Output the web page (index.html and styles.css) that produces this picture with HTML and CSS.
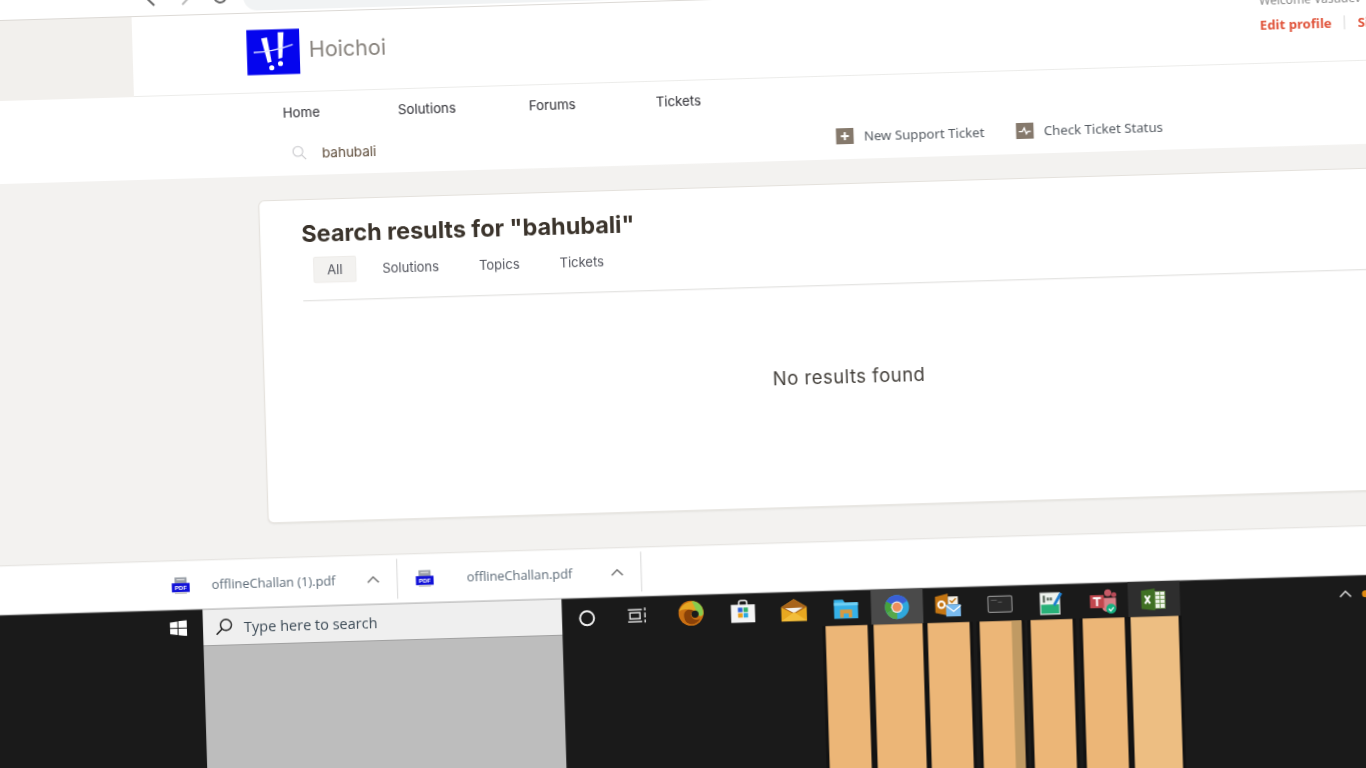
FILE: index.html
```html
<!DOCTYPE html>
<html lang="en">
<head>
<meta charset="utf-8">
<title>Hoichoi support search</title>
<link rel="stylesheet" href="styles.css">
</head>
<body>
<div class="stage">
  <div class="toolbar">
    <svg class="tb-icon" viewBox="0 0 16 16"><path d="M9 1 2 8l7 7M2 8h14" fill="none" stroke="#666" stroke-width="2"/></svg>
    <svg class="tb-icon" viewBox="0 0 16 16"><path d="M7 1l7 7-7 7" fill="none" stroke="#bbb" stroke-width="2"/></svg>
    <svg class="tb-icon tb-reload" viewBox="0 0 16 16"><path d="M14 8a6 6 0 1 1-2-4.5" fill="none" stroke="#666" stroke-width="2"/></svg>
    <div class="address"></div>
  </div>

  <header class="head">
    <div class="head-side"></div>
    <div class="head-main">
      <svg class="logo" viewBox="0 0 54 46">
        <rect width="54" height="46" fill="#0505ee"/>
        <path d="M15 9l6-1 4 25-4 1zM32 3h6l-2 26-4 1z" fill="#fff"/>
        <circle cx="25" cy="39" r="2.6" fill="#fff"/><circle cx="34" cy="35" r="2.6" fill="#fff"/>
        <path d="M7 23c13 0 28-3 40-7" fill="none" stroke="#dfe3ff" stroke-width="1.4"/>
      </svg>
      <span class="brand">Hoichoi</span>
      <div class="user">
        <div class="welcome">Welcome Vasudev</div>
        <div class="links"><span class="link">Edit profile</span><span class="pipe"></span><span class="link">Sign out</span></div>
      </div>
    </div>
  </header>

  <nav class="nav">
    <div class="nav-links">
      <span class="nav-link">Home</span>
      <span class="nav-link">Solutions</span>
      <span class="nav-link nav-forums">Forums</span>
      <span class="nav-link nav-tickets">Tickets</span>
    </div>
    <div class="nav-tools">
      <div class="search">
        <svg class="search-icon" viewBox="0 0 16 16"><circle cx="6.5" cy="6.5" r="5.2" fill="none" stroke="#c4c4c8" stroke-width="1.1"/><path d="M10.5 10.5 15 15" stroke="#c4c4c8" stroke-width="1.1"/></svg>
        <span class="search-text">bahubali</span>
      </div>
      <div class="action">
        <svg class="action-icon" viewBox="0 0 18 16"><rect width="18" height="16" fill="#85796c"/><path d="M9 4v8M5 8h8" stroke="#fff" stroke-width="2"/></svg>
        <span>New Support Ticket</span>
      </div>
      <div class="action">
        <svg class="action-icon" viewBox="0 0 18 16"><rect width="18" height="16" fill="#85796c"/><path d="M3 8.5h3.5L8.5 5l2 6 1.5-2.5h3" fill="none" stroke="#fff" stroke-width="1.3"/></svg>
        <span>Check Ticket Status</span>
      </div>
    </div>
  </nav>

  <main class="body">
    <section class="card">
      <h1 class="title">Search results for "bahubali"</h1>
      <div class="tabs">
        <span class="tab tab-on">All</span>
        <span class="tab">Solutions</span>
        <span class="tab">Topics</span>
        <span class="tab">Tickets</span>
      </div>
      <div class="rule"></div>
      <p class="empty">No results found</p>
    </section>
  </main>

  <div class="downloads">
    <div class="dl">
      <svg class="pdf" viewBox="0 0 18 17"><rect x="3" y="0" width="12" height="8" fill="#9aa0a8"/><rect x="5" y="2" width="8" height="1" fill="#e8e8e8"/><rect x="0" y="6" width="18" height="9" fill="#1212d8"/><rect x="3" y="15" width="12" height="2" fill="#c8c8c8"/><text x="9" y="13.2" class="pdf-text">PDF</text></svg>
      <span class="dl-name">offlineChallan (1).pdf</span>
      <svg class="chev" viewBox="0 0 13 8"><path d="M1 7l5.500-5.500L12 7" fill="none" stroke="#777" stroke-width="1.6"/></svg>
    </div>
    <div class="dl dl-second">
      <svg class="pdf" viewBox="0 0 18 17"><rect x="3" y="0" width="12" height="8" fill="#9aa0a8"/><rect x="5" y="2" width="8" height="1" fill="#e8e8e8"/><rect x="0" y="6" width="18" height="9" fill="#1212d8"/><rect x="3" y="15" width="12" height="2" fill="#c8c8c8"/><text x="9" y="13.2" class="pdf-text">PDF</text></svg>
      <span class="dl-name">offlineChallan.pdf</span>
      <svg class="chev" viewBox="0 0 13 8"><path d="M1 7l5.500-5.500L12 7" fill="none" stroke="#777" stroke-width="1.6"/></svg>
    </div>
  </div>

  <footer class="taskbar">
    <div class="start">
      <svg class="win" viewBox="0 0 17 16"><path d="M0 2.300 7.500 1.200V7.500H0zM8.500 1 17 0V7.500H8.500zM0 8.500H7.500V14.800L0 13.700zM8.500 8.500H17V16L8.500 15z" fill="#fff"/></svg>
    </div>
    <div class="tsearch">
      <div class="tsearch-box">
        <svg class="tsearch-icon" viewBox="0 0 18 18"><circle cx="11" cy="7" r="5.500" fill="none" stroke="#222" stroke-width="1.400"/><path d="M7 11 1.500 16.500" stroke="#222" stroke-width="1.600"/></svg>
        <span>Type here to search</span>
      </div>
      <div class="tsearch-fill"></div>
    </div>
    <div class="apps">
      <div class="app"><div class="cell"><svg class="ico" viewBox="0 0 26 26"><circle cx="11" cy="15" r="7" fill="none" stroke="#eee" stroke-width="2"/></svg></div></div>
      <div class="app"><div class="cell"><svg class="ico" viewBox="0 0 26 26"><path d="M1 8h14M1 20h14M3 11h10v6H3zM18 6v3M18 11v5M18 18v3" fill="none" stroke="#ddd" stroke-width="1.500"/></svg></div></div>
      <div class="app"><div class="cell"><svg class="ico" viewBox="0 0 26 26"><circle cx="13" cy="13" r="12.500" fill="#c96f12"/><path d="M1 11C4 2 18-3 24 7c2 4 2 8 0 9-2 1-3 0-5-2C15 9 6 7 1 11z" fill="#e5a623"/><path d="M14 1c6 0 12 5 11 13 0 2-4 3-6 0-1-3-2-8-5-13z" fill="#86cc4e"/><path d="M6 15c0-5 6-7 10-4-2 0-4 2-3 5s5 5 9 3c-3 5-9 6-12 4-3-1-4-5-4-8z" fill="#8a4108"/><circle cx="17" cy="14" r="3.600" fill="#1b1b1b"/></svg></div></div>
      <div class="app"><div class="cell"><svg class="ico" viewBox="0 0 26 26"><path d="M9 7V4a2 2 0 0 1 2-2h4a2 2 0 0 1 2 2v3" fill="none" stroke="#eee" stroke-width="1.500"/><rect x="1" y="6" width="24" height="18" fill="#f4f4f4"/><rect x="8" y="9" width="4.500" height="4.500" fill="#2a5fd8"/><rect x="13.500" y="9" width="4.500" height="4.500" fill="#2fae6a"/><rect x="8" y="14.500" width="4.500" height="4.500" fill="#e9a01a"/><rect x="13.500" y="14.500" width="4.500" height="4.500" fill="#2aa8e0"/></svg></div></div>
      <div class="app"><div class="cell"><svg class="ico" viewBox="0 0 26 26"><path d="M0 10 13 2l13 8v14H0z" fill="#e8a820"/><path d="M0 10 13 2l13 8-13 7z" fill="#a8641a"/><path d="M4 11l18-.5L13 16z" fill="#f4f2ee"/><path d="M0 24 13 15l13 9z" fill="#f2bd3a"/></svg></div></div>
      <div class="app"><div class="cell"><svg class="ico" viewBox="0 0 26 26"><path d="M1 4h9l2 3h13v16H1z" fill="#35b1e8"/><rect x="1" y="7" width="24" height="3" fill="#6fd0f5"/><path d="M7 22v-8h12v8h-3.500v-4h-5v4z" fill="#d69a40"/></svg></div></div>
      <div class="app app-on"><div class="cell"><svg class="ico" viewBox="0 0 26 26"><circle cx="13" cy="13" r="12" fill="#2fa8dd"/><path d="M13 13 2.600 19A12 12 0 0 1 2.600 7Z" fill="#47a13a"/><path d="M13 13 2.600 7A12 12 0 0 1 23.400 7Z" fill="#3a5fd6"/><path d="M13 13 13 25A12 12 0 0 1 2.600 19Z" fill="#58a84a"/><circle cx="13" cy="13" r="5.800" fill="#ececec"/><circle cx="13" cy="13" r="4.500" fill="#ee8f5c"/></svg></div></div>
      <div class="app"><div class="cell"><svg class="ico" viewBox="0 0 26 26"><path d="M0 4 13 1v22L0 20z" fill="#c47512"/><circle cx="6.500" cy="12" r="3.200" fill="none" stroke="#fff" stroke-width="2"/><rect x="13" y="4" width="10" height="8" fill="#f6f1e6"/><path d="M15 8l2 2 4-4" fill="none" stroke="#c47512" stroke-width="1.300"/><rect x="11" y="12" width="15" height="12" fill="#79bbf0"/><path d="M11 13l7.500 6L26 13" fill="none" stroke="#fff" stroke-width="1.300"/></svg></div></div>
      <div class="app"><div class="cell"><svg class="ico" viewBox="0 0 26 26"><rect x="1" y="5" width="24" height="16" rx="1.500" fill="#2a2a2a" stroke="#8b8b8b" stroke-width="1.200"/><path d="M4 9h6M11 11h4" stroke="#555" stroke-width="1.200"/></svg></div></div>
      <div class="app"><div class="cell"><svg class="ico" viewBox="0 0 26 26"><rect x="2" y="3" width="20" height="22" fill="#eef2ee" stroke="#999" stroke-width=".8"/><path d="M3 15h18v9H3z" fill="#28b078"/><path d="M5 6h2v7H5zM9 8h2v3H9zM12 8h2v3h-2z" fill="#4a5a4e"/><path d="M15 15 22 3l2.500 1.500L17 17z" fill="#1f7fd0"/></svg></div></div>
      <div class="app"><div class="cell"><svg class="ico ico-wide" viewBox="0 0 28 26"><circle cx="19" cy="5" r="3.500" fill="#c75a66"/><circle cx="25" cy="7" r="2.500" fill="#b94a58"/><path d="M13 10h14v9a5 5 0 0 1-5 5h-4a5 5 0 0 1-5-5z" fill="#d98088"/><rect x="1" y="7" width="14" height="13" fill="#c2484f"/><path d="M4 10h8M8 10v8" stroke="#fff" stroke-width="2"/><circle cx="22" cy="21" r="5" fill="#16b080"/><path d="M19.500 21l2 2 3-3.500" fill="none" stroke="#fff" stroke-width="1.200"/></svg></div></div>
      <div class="app app-dim"><div class="cell"><svg class="ico" viewBox="0 0 26 26"><path d="M0 4 14 2v22L0 22z" fill="#3f7023"/><path d="M4 9l5 8M9 9l-5 8" stroke="#fff" stroke-width="2"/><rect x="14" y="5" width="10" height="17" fill="#eef3e8" stroke="#5e8a3f" stroke-width=".8"/><path d="M14 9h10M14 13h10M14 17h10M19 5v17" stroke="#5e8a3f" stroke-width=".8"/></svg></div></div>
    </div>
    <div class="tray">
      <svg class="tray-chev" viewBox="0 0 13 8"><path d="M1 7l5.500-5.500L12 7" fill="none" stroke="#ddd" stroke-width="1.500"/></svg>
      <span class="tray-dot"></span>
    </div>
  </footer>
</div>
</body>
</html>
```

FILE: styles.css
```css
html, body {
  margin: 0;
  width: 1366px;
  height: 768px;
  overflow: hidden;
  background: #fff;
}

.stage {
  width: 1480px;
  height: 830px;
  margin-left: -40px;
  display: flex;
  flex-direction: column;
  transform-origin: 40px 0;
  transform: matrix(1, -0.0295, 0.03, 1, 0, 0);
  filter: blur(0.4px);
  font-family: Inter, "Noto Sans", sans-serif;
}

.toolbar {
  height: 21px;
  box-sizing: border-box;
  flex: none;
  display: flex;
  align-items: flex-end;
  padding: 0 0 9px 185px;
  gap: 14px;
  background: #fff;
  border-bottom: 1px solid #dcd9d5;
}
.tb-icon { width: 16px; height: 16px; flex: none; }
.tb-reload { margin-left: 7px; }
.address {
  width: 900px;
  height: 40px;
  flex: none;
  margin: 0 0 -7px 1px;
  border-radius: 14px;
  background: #f1f3f4;
}

.head { height: 80px; flex: none; display: flex; }
.head-side { width: 171px; flex: none; background: #f2f0ed; }
.head-main {
  flex: 1;
  display: flex;
  align-items: flex-start;
  padding-left: 114px;
  background: #fff;
  border-bottom: 1px solid #ececea;
}
.logo { width: 53px; height: 46px; flex: none; margin-top: 16px; }
.brand {
  margin: 24px 0 0 9px;
  font-size: 21.5px;
  line-height: 26px;
  color: #88837d;
  width: 951px;
  flex: none;
}
.user { width: 180px; flex: none; font-family: "Noto Sans", sans-serif; }
.welcome { margin-top: 9px; font-size: 12px; line-height: 16px; color: #888; }
.links { display: flex; align-items: center; margin-top: 7px; font-size: 13.2px; font-weight: 700; color: #e0533a; line-height: 18px; }
.pipe { width: 1px; height: 14px; background: #d8d8d8; margin: 0 13px 0 12px; }
.link { white-space: nowrap; }

.nav { height: 83px; flex: none; background: #fff; box-sizing: border-box; padding: 10px 0 0 319px; }
.nav-links { display: flex; gap: 78px; height: 19px; align-items: center; font-size: 13.3px; color: #2e2e34; }
.nav-forums { margin-left: -5px; }
.nav-tickets { margin-left: 2px; }
.nav-tools { display: flex; align-items: center; height: 19px; margin-top: 21px; font-family: "Noto Sans", sans-serif; font-size: 13.2px; color: #555b62; }
.search { width: 552px; flex: none; display: flex; align-items: center; gap: 15px; padding: 3px 0 0 8px; box-sizing: border-box; }
.search-icon { width: 15px; height: 15px; flex: none; margin-top: -2px; }
.search-text { color: #5c4a38; font-family: Inter, sans-serif; font-size: 13.5px; }
.action { width: 180px; flex: none; display: flex; align-items: center; gap: 10px; white-space: nowrap; }
.action-icon { width: 18px; height: 16px; flex: none; }

.body { height: 381px; flex: none; background: #f3f2f0; box-sizing: border-box; padding: 24px 0 0 292px; }
.card {
  width: 1170px;
  height: 323px;
  box-sizing: border-box;
  padding: 19px 0 0 41px;
  background: #fff;
  border: 1px solid #e4e1dc;
  border-radius: 6px;
  box-shadow: 0 1px 2px rgba(0, 0, 0, .06);
}
.title { margin: 0; font-size: 23.4px; line-height: 30px; font-weight: 700; color: #3a332b; white-space: nowrap; }
.tabs { display: flex; gap: 10px; height: 26px; margin: 8px 0 0 11px; font-size: 13px; color: #51535c; align-items: stretch; }
.tab { padding: 0 15px; display: flex; align-items: center; }
.tab-on { padding: 0 12px; margin-right: 1px; background: #f3f2f0; border: 1px solid #eeece9; border-radius: 2px; box-sizing: border-box; width: 43px; justify-content: center; }
.rule { height: 1px; margin: 17px 0 0 0; background: #dddcda; }
.empty { margin: 79px 0 0 -41px; text-align: center; font-size: 18.5px; letter-spacing: .5px; line-height: 24px; color: #45413c; }

.downloads {
  height: 50px;
  flex: none;
  box-sizing: border-box;
  display: flex;
  align-items: center;
  padding-left: 194px;
  background: #fff;
  border-top: 1px solid #dfddd9;
  border-bottom: 1px solid #ccc;
  font-family: "Open Sans", sans-serif;
  font-size: 12.8px;
  color: #5d6b78;
}
.dl { width: 226px; height: 40px; flex: none; box-sizing: border-box; display: flex; align-items: center; gap: 22px; padding-right: 17px; border-right: 1px solid #d8d8d8; }
.dl-second { width: 244px; padding-left: 18px; gap: 33px; }
.dl-name { flex: 1; white-space: nowrap; }
.pdf { width: 18px; height: 17px; flex: none; }
.pdf-text { font-family: "Liberation Sans", sans-serif; font-size: 6px; font-weight: 700; fill: #fff; text-anchor: middle; }
.chev { width: 13px; height: 8px; flex: none; }

.taskbar { flex: 1; display: flex; background: #1a1a1a; }
.start { width: 224px; flex: none; height: 36px; display: flex; align-items: center; padding-left: 191px; box-sizing: border-box; }
.win { width: 17px; height: 16px; }
.tsearch { width: 359px; flex: none; display: flex; flex-direction: column; }
.tsearch-box {
  height: 36px;
  flex: none;
  display: flex;
  align-items: center;
  gap: 11px;
  padding-left: 12px;
  background: #efefef;
  font-family: "Open Sans", sans-serif;
  font-size: 14.5px;
  color: #3c4a56;
}
.tsearch-icon { width: 18px; height: 18px; flex: none; }
.tsearch-fill { flex: 1; background: #bdbdbd; }

.apps { display: flex; flex: none; margin-left: 1px; }
.app { width: 51.4px; flex: none; display: flex; flex-direction: column; }
.cell { height: 35px; display: flex; align-items: center; justify-content: center; }
.ico { width: 26px; height: 26px; }
.ico-wide { width: 28px; }
.app-on .cell { background: #4a4a4a; }
.app-dim .cell { background: #2e2e2e; }
.app:nth-child(n+6)::after { content: ""; flex: 1; width: 42px; margin: 0 auto; background: #ecb677; box-shadow: -3px 0 0 #121212, 3px 0 0 #121212; }
.app-on::after { width: 49px !important; }
.app-dim::after { width: 48px !important; background: #edbe82 !important; box-shadow: inset -4px 0 0 #c09a63, -3px 0 0 #121212; }
.app:nth-child(9)::after { box-shadow: inset -10px 0 0 #c09a63, -3px 0 0 #121212, 3px 0 0 #121212; }

.tray { display: flex; align-items: center; height: 36px; margin-left: 159px; gap: 10px; }
.tray-chev { width: 13px; height: 8px; }
.tray-dot { width: 7px; height: 7px; border-radius: 50%; background: #e08a10; }
```
